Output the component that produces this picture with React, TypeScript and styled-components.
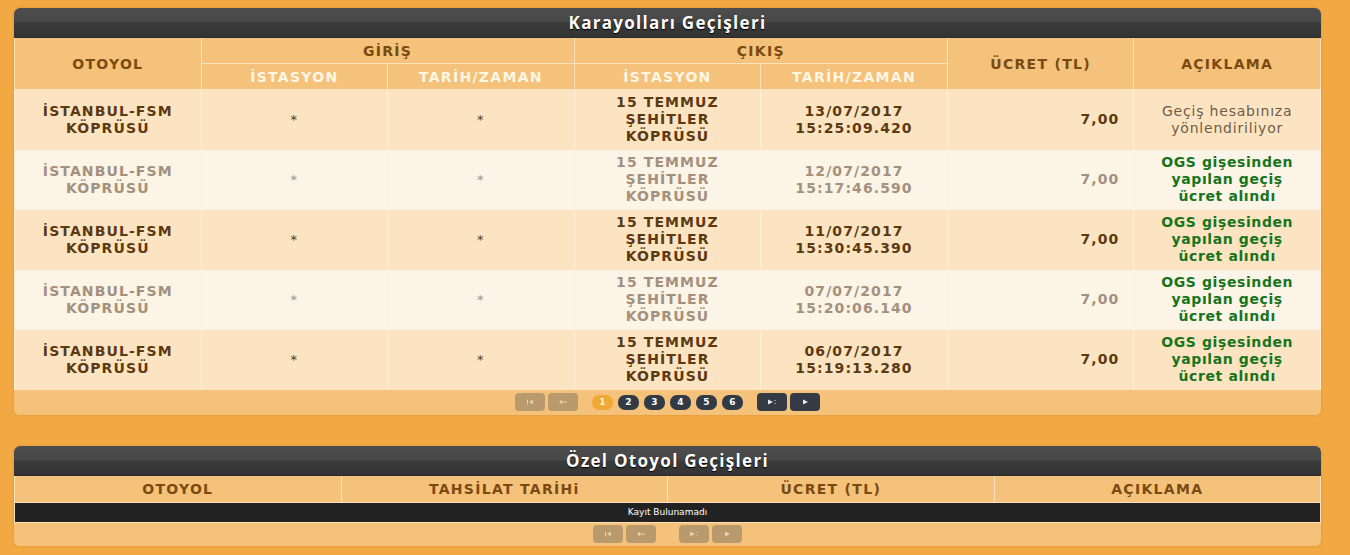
import React from "react";
import styled, { createGlobalStyle } from "styled-components";

const Global = createGlobalStyle`
  html, body { margin: 0; padding: 0; background: #f2a944; }
  body { font-family: "DejaVu Sans", Verdana, sans-serif; }
`;

const Page = styled.div`
  width: 1350px;
  height: 555px;
  box-sizing: border-box;
  padding: 8px 29px 0 14px;
  display: flex;
  flex-direction: column;
  gap: 31px;
  background: #f2a944;
  overflow: hidden;
`;

const Panel = styled.section`
  width: 1307px;
  border-radius: 6px;
  overflow: hidden;
  background: #f5c27b;
  box-shadow: 0 0 3px rgba(180, 110, 20, 0.35);
`;

const TitleBar = styled.div`
  height: 30px;
  display: flex;
  align-items: center;
  justify-content: center;
  background: linear-gradient(#4d4d4d 0%, #474747 48%, #3a3a3a 52%, #333 100%);
  border-bottom: 1px solid #2b2b2b;
  box-sizing: border-box;
  color: #fff;
  font-family: "Open Sans", sans-serif;
  font-weight: 700;
  font-size: 17px;
  letter-spacing: 1.3px;
  text-shadow: 0 1px 1px #000;
`;

const Table = styled.table`
  width: 100%;
  border-collapse: collapse;
  table-layout: fixed;
`;

const HeadCell = styled.th<{ $light?: boolean; $h?: number }>`
  height: ${(p) => p.$h ?? 25}px;
  padding: 0;
  background: #f5c27b;
  color: ${(p) => (p.$light ? "#fff6e4" : "#7a4a10")};
  font-size: 14px;
  font-weight: 700;
  letter-spacing: 1.3px;
  text-align: center;
  border: 1px solid #fbe2bd;
  border-top: none;
`;

const Row = styled.tr<{ $even?: boolean }>`
  height: 60px;
  background: ${(p) => (p.$even ? "#fdf4e8" : "#fce4c3")};
  color: ${(p) => (p.$even ? "#a3917d" : "#5c3a10")};
`;

const Cell = styled.td<{ $align?: string }>`
  padding: 0 ${(p) => (p.$align === "right" ? "14px" : "2px")} 0 2px;
  text-align: ${(p) => p.$align || "center"};
  font-size: 14px;
  font-weight: 700;
  line-height: 17px;
  letter-spacing: 1.1px;
  border-left: 1px solid #fdf0dc;
  border-right: 1px solid #fdf0dc;
`;

const Note = styled.span<{ $ok?: boolean }>`
  display: inline-block;
  color: ${(p) => (p.$ok ? "#17741c" : "#6e5c47")};
  font-weight: ${(p) => (p.$ok ? 700 : 400)};
  letter-spacing: ${(p) => (p.$ok ? "0.6px" : "0.8px")};
`;

const Star = styled.span`
  font-weight: 400;
  font-size: 13px;
`;

const EmptyRow = styled.tr`
  height: 20px;
  background: #222;
`;

const EmptyCell = styled.td`
  color: #fff;
  font-size: 9px;
  text-align: center;
  padding: 0;
  border: 1px solid #fbe2bd;
  border-top: none;
`;

const Footer = styled.div<{ $h: number; $gap: number }>`
  height: ${(p) => p.$h}px;
  display: flex;
  align-items: center;
  justify-content: center;
  gap: ${(p) => p.$gap}px;
  background: #f5c27b;
`;

const Group = styled.div<{ $gap: number }>`
  display: flex;
  gap: ${(p) => p.$gap}px;
`;

const NavBtn = styled.div<{ $off?: boolean }>`
  width: 30px;
  height: 18px;
  border-radius: 4px;
  background: ${(p) => (p.$off ? "#b89a6c" : "#353b44")};
  display: flex;
  align-items: center;
  justify-content: center;
  color: ${(p) => (p.$off ? "#e6d3b3" : "#e9ecef")};
`;

const Num = styled.div<{ $active?: boolean }>`
  width: 21px;
  height: 15px;
  border-radius: 7px;
  background: ${(p) => (p.$active ? "#f0a935" : "#323a46")};
  color: ${(p) => (p.$active ? "#fff3d0" : "#fff")};
  font-size: 9px;
  font-weight: 700;
  display: flex;
  align-items: center;
  justify-content: center;
`;

const Icon = ({ kind }: { kind: "first" | "prev" | "next" | "last" }) => (
  <svg width="10" height="8" viewBox="0 0 10 8" fill="currentColor">
    {kind === "first" && (
      <>
        <rect x="2" y="1.5" width="1" height="5" />
        <path d="M4 4 L8 1.8 L8 6.2 Z" />
      </>
    )}
    {kind === "prev" && (
      <>
        <path d="M1 4 L4 1.8 L4 6.2 Z" />
        <rect x="4" y="3.5" width="5" height="1" />
      </>
    )}
    {kind === "next" && (
      <>
        <path d="M1 1.5 L6 4 L1 6.5 Z" />
        <rect x="7.5" y="2" width="1" height="1" />
        <rect x="7.5" y="5" width="1" height="1" />
      </>
    )}
    {kind === "last" && <path d="M3 1.5 L8 4 L3 6.5 Z" />}
  </svg>
);

type Rec = {
  date: string;
  time: string;
  ok: boolean;
};

const records: Rec[] = [
  { date: "13/07/2017", time: "15:25:09.420", ok: false },
  { date: "12/07/2017", time: "15:17:46.590", ok: true },
  { date: "11/07/2017", time: "15:30:45.390", ok: true },
  { date: "07/07/2017", time: "15:20:06.140", ok: true },
  { date: "06/07/2017", time: "15:19:13.280", ok: true },
];

export default function App() {
  return (
    <>
      <Global />
      <Page>
        <Panel>
          <TitleBar>Karayolları Geçişleri</TitleBar>
          <Table>
            <thead>
              <tr>
                <HeadCell rowSpan={2}>OTOYOL</HeadCell>
                <HeadCell colSpan={2}>GİRİŞ</HeadCell>
                <HeadCell colSpan={2}>ÇIKIŞ</HeadCell>
                <HeadCell rowSpan={2}>ÜCRET (TL)</HeadCell>
                <HeadCell rowSpan={2}>AÇIKLAMA</HeadCell>
              </tr>
              <tr>
                <HeadCell $light>İSTASYON</HeadCell>
                <HeadCell $light>TARİH/ZAMAN</HeadCell>
                <HeadCell $light>İSTASYON</HeadCell>
                <HeadCell $light>TARİH/ZAMAN</HeadCell>
              </tr>
            </thead>
            <tbody>
              {records.map((r, i) => (
                <Row key={i} $even={i % 2 === 1}>
                  <Cell>
                    İSTANBUL-FSM
                    <br />
                    KÖPRÜSÜ
                  </Cell>
                  <Cell>
                    <Star>*</Star>
                  </Cell>
                  <Cell>
                    <Star>*</Star>
                  </Cell>
                  <Cell>
                    15 TEMMUZ
                    <br />
                    ŞEHİTLER
                    <br />
                    KÖPRÜSÜ
                  </Cell>
                  <Cell>
                    {r.date}
                    <br />
                    {r.time}
                  </Cell>
                  <Cell $align="right">7,00</Cell>
                  <Cell>
                    {r.ok ? (
                      <Note $ok>
                        OGS gişesinden
                        <br />
                        yapılan geçiş
                        <br />
                        ücret alındı
                      </Note>
                    ) : (
                      <Note>
                        Geçiş hesabınıza
                        <br />
                        yönlendiriliyor
                      </Note>
                    )}
                  </Cell>
                </Row>
              ))}
            </tbody>
          </Table>
          <Footer $h={25} $gap={14}>
            <Group $gap={3}>
              <NavBtn $off>
                <Icon kind="first" />
              </NavBtn>
              <NavBtn $off>
                <Icon kind="prev" />
              </NavBtn>
            </Group>
            <Group $gap={5}>
              {[1, 2, 3, 4, 5, 6].map((n) => (
                <Num key={n} $active={n === 1}>
                  {n}
                </Num>
              ))}
            </Group>
            <Group $gap={3}>
              <NavBtn>
                <Icon kind="next" />
              </NavBtn>
              <NavBtn>
                <Icon kind="last" />
              </NavBtn>
            </Group>
          </Footer>
        </Panel>

        <Panel>
          <TitleBar>Özel Otoyol Geçişleri</TitleBar>
          <Table>
            <thead>
              <tr>
                <HeadCell $h={26}>OTOYOL</HeadCell>
                <HeadCell $h={26}>TAHSİLAT TARİHi</HeadCell>
                <HeadCell $h={26}>ÜCRET (TL)</HeadCell>
                <HeadCell $h={26}>AÇIKLAMA</HeadCell>
              </tr>
            </thead>
            <tbody>
              <EmptyRow>
                <EmptyCell colSpan={4}>Kayıt Bulunamadı</EmptyCell>
              </EmptyRow>
            </tbody>
          </Table>
          <Footer $h={23} $gap={23}>
            <Group $gap={3}>
              <NavBtn $off>
                <Icon kind="first" />
              </NavBtn>
              <NavBtn $off>
                <Icon kind="prev" />
              </NavBtn>
            </Group>
            <Group $gap={3}>
              <NavBtn $off>
                <Icon kind="next" />
              </NavBtn>
              <NavBtn $off>
                <Icon kind="last" />
              </NavBtn>
            </Group>
          </Footer>
        </Panel>
      </Page>
    </>
  );
}
